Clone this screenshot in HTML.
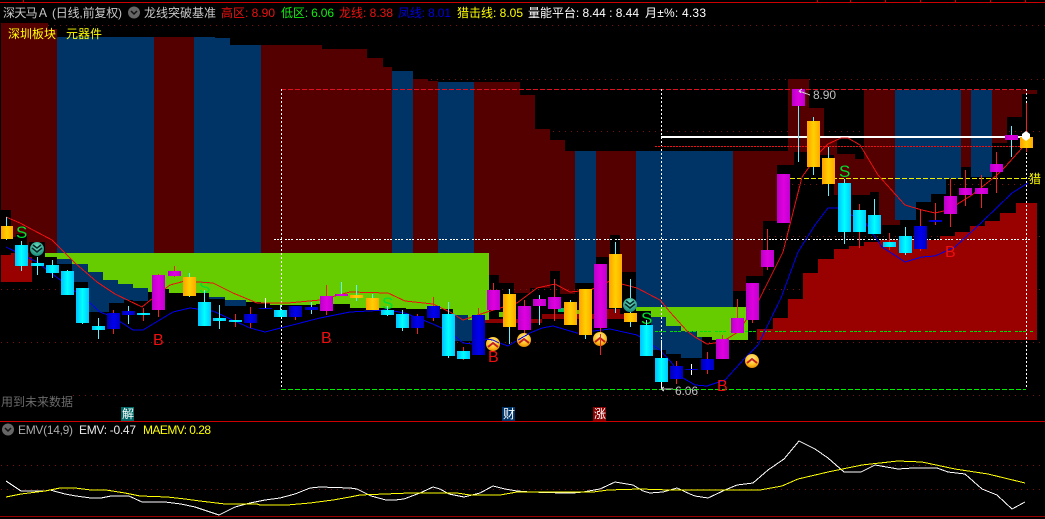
<!DOCTYPE html>
<html><head><meta charset="utf-8"><style>
html,body{margin:0;padding:0;background:#000;width:1045px;height:519px;overflow:hidden}
svg{display:block}
text{font-family:"Liberation Sans","WenQuanYi Zen Hei","Noto Sans CJK SC",sans-serif;font-size:12px}
</style></head><body>
<svg width="1045" height="519" viewBox="0 0 1045 519" xmlns="http://www.w3.org/2000/svg">
<defs>
<linearGradient id="o"><stop offset="0" stop-color="#ffa000"/><stop offset=".5" stop-color="#ffd000"/><stop offset="1" stop-color="#ffa800"/></linearGradient>
<linearGradient id="c"><stop offset="0" stop-color="#00c0ff"/><stop offset=".5" stop-color="#00ffff"/><stop offset="1" stop-color="#00c8ff"/></linearGradient>
<linearGradient id="m"><stop offset="0" stop-color="#b800c8"/><stop offset=".5" stop-color="#e000e0"/><stop offset="1" stop-color="#c000d0"/></linearGradient>
<linearGradient id="b"><stop offset="0" stop-color="#0000b0"/><stop offset=".5" stop-color="#0000f0"/><stop offset="1" stop-color="#0000c0"/></linearGradient>
<radialGradient id="ou" cx=".5" cy=".35" r=".7"><stop offset="0" stop-color="#fff2a0"/><stop offset=".6" stop-color="#ffc020"/><stop offset="1" stop-color="#e08000"/></radialGradient>
<radialGradient id="te" cx=".5" cy=".35" r=".7"><stop offset="0" stop-color="#70e8c8"/><stop offset="1" stop-color="#128070"/></radialGradient>
</defs>
<rect width="1045" height="519" fill="#000"/>

<g shape-rendering="crispEdges">
<!-- grid -->
<g stroke="#7a1010" stroke-width="1" stroke-dasharray="1 5" fill="none">
<path d="M48 25.5H1045M413 79.5H1045M553 131.5H1045M792 184.5H1030M769 236.5H1045M1 289.5H1045M1 342.5H1045M73 395.5H1045M1 465.5H1045M1 489.5H1045"/>
</g>
<!-- dark red / blue blocks -->
<g fill="#550000">
<rect x="1" y="23" width="10" height="187"/>
<rect x="11" y="23" width="5" height="214"/>
<rect x="16" y="23" width="11" height="211"/>
<rect x="27" y="23" width="21" height="230"/>
<rect x="48" y="29" width="9" height="224"/>
<rect x="154" y="37" width="40" height="216"/>
<rect x="261" y="45" width="61" height="208"/>
<rect x="322" y="49" width="45" height="204"/>
<rect x="367" y="58" width="16" height="195"/>
<rect x="383" y="67" width="9" height="186"/>
<rect x="413" y="79" width="15" height="174"/>
<rect x="428" y="81" width="10" height="172"/>
<rect x="474" y="82" width="46" height="232"/>
<rect x="520" y="95" width="15" height="219"/>
<rect x="535" y="129" width="15" height="185"/>
<rect x="550" y="140" width="15" height="174"/>
<rect x="565" y="151" width="10" height="163"/>
<rect x="596" y="151" width="40" height="163"/>
<rect x="733" y="151" width="13" height="140"/>
<rect x="746" y="151" width="17" height="125"/>
<rect x="763" y="151" width="14" height="70"/>
<rect x="777" y="151" width="17" height="14"/>
<rect x="788" y="79" width="21" height="73"/>
<rect x="809" y="108" width="15" height="47"/>
<rect x="824" y="137" width="13" height="18"/>
<rect x="834" y="154" width="21" height="41"/>
<rect x="855" y="159" width="15" height="36"/>
<rect x="864" y="90" width="31" height="102"/>
<rect x="870" y="90" width="9" height="102"/>
<rect x="879" y="90" width="21" height="135"/>
<rect x="961" y="90" width="10" height="77"/>
<rect x="992" y="90" width="15" height="53"/>
<rect x="1007" y="90" width="15" height="27"/>
<rect x="1022" y="90" width="15" height="4"/>
</g>
<g fill="#003366">
<rect x="57" y="37" width="97" height="216"/>
<rect x="194" y="37" width="21" height="216"/>
<rect x="215" y="38" width="15" height="215"/>
<rect x="230" y="45" width="31" height="208"/>
<rect x="392" y="71" width="21" height="182"/>
<rect x="438" y="82" width="36" height="171"/>
<rect x="575" y="151" width="21" height="132"/>
<rect x="636" y="151" width="97" height="156"/>
<rect x="895" y="90" width="21" height="130"/>
<rect x="916" y="90" width="15" height="112"/>
<rect x="931" y="90" width="15" height="104"/>
<rect x="946" y="90" width="15" height="89"/>
<rect x="971" y="90" width="21" height="87"/>
<!-- stairs below green -->
<rect x="57" y="259" width="15" height="5"/>
<rect x="72" y="264" width="16" height="18"/>
<rect x="88" y="272" width="15" height="40"/>
<rect x="103" y="280" width="6" height="32"/>
<rect x="109" y="280" width="9" height="23"/>
<rect x="118" y="284" width="6" height="19"/>
<rect x="124" y="284" width="9" height="16"/>
<rect x="133" y="288" width="15" height="13"/>
<rect x="209" y="293" width="16" height="6"/>
<rect x="225" y="297" width="21" height="9"/>
<rect x="454" y="315" width="19" height="26"/>
<rect x="651" y="317" width="15" height="33"/>
<rect x="666" y="326" width="15" height="28"/>
<rect x="681" y="331" width="21" height="27"/>
</g>
<!-- bright red left -->
<rect x="1" y="255" width="31" height="27" fill="#990000"/>
<rect x="11" y="253" width="21" height="2" fill="#990000"/>
<rect x="45" y="253" width="12" height="4" fill="#66cc00"/>
<!-- black behind candles strip -->
<g fill="#000">
<rect x="489" y="275" width="10" height="49"/><rect x="499" y="283" width="15" height="41"/><rect x="514" y="293" width="16" height="31"/><rect x="530" y="288" width="20" height="36"/><rect x="550" y="271" width="10" height="53"/><rect x="560" y="294" width="20" height="30"/><rect x="580" y="283" width="16" height="41"/><rect x="596" y="257" width="14" height="67"/><rect x="610" y="235" width="10" height="89"/><rect x="620" y="272" width="16" height="52"/>
<rect x="29" y="242" width="16" height="15"/>
</g>
<g stroke="#7a1010" stroke-dasharray="1 5" fill="none"><path d="M490 289.5H620"/></g>
<rect x="474" y="319" width="68" height="4" fill="#880000"/>
<rect x="542" y="314" width="94" height="5" fill="#880000"/>
<rect x="606" y="309" width="14" height="9" fill="#880000"/>
<rect x="576" y="310" width="14" height="4" fill="#66cc00"/>
<rect x="499" y="312" width="4" height="5" fill="#66cc00"/>
<rect x="558" y="308" width="6" height="4" fill="#00c060"/>
<!-- green -->
<polygon fill="#66cc00" points="57,253 489,253 489,320 468,320 468,315 453,315 453,309 406,309 406,308 350,308 350,304 316,304 316,305 270,305 270,303 261,303 261,302 246,302 246,300 225,300 225,297 209,297 209,293 169,293 169,289 165,289 165,292 148,292 148,288 133,288 133,284 118,284 118,280 103,280 103,272 88,272 88,264 72,264 72,259 57,259"/>
<polygon fill="#66cc00" points="636,307 748,307 748,340 712,340 712,337 697,337 697,331 681,331 681,326 666,326 666,317 651,317 651,311 636,311"/>
<!-- bright red stairs right -->
<polygon fill="#990000" points="757,340 757,329 773,329 773,318 788,318 788,299 803,299 803,273 818,273 818,259 834,259 834,249 849,249 849,246 864,246 864,242 880,242 880,240 940,240 940,236 955,236 955,232 970,232 970,226 985,226 985,221 1000,221 1000,213 1016,213 1016,203 1037,203 1037,340"/>

<!-- overlay lines -->
<path d="M281 89.5H1026" stroke="#e01020" stroke-dasharray="5 2" fill="none"/>
<path d="M281.5 89V389M661.5 89V390M1026.5 89V389" stroke="#fff" stroke-dasharray="2 2" fill="none"/>
<path d="M274 239.5H1033" stroke="#fff" stroke-dasharray="2 1 2 1 2 3" fill="none"/>
<path d="M281 389.5H1026" stroke="#00ee00" stroke-dasharray="5 2" fill="none"/>
<path d="M655 146.5H1020" stroke="#ee1111" stroke-dasharray="2 1" fill="none"/>
<path d="M655 331.5H1033" stroke="#00dd00" stroke-dasharray="3 1 3 1 3 4" fill="none"/>
<path d="M790 178.5H1030" stroke="#eeee00" stroke-dasharray="5 2" fill="none"/>
<rect x="661" y="136" width="365" height="2" fill="#fff"/>
</g>

<!-- S markers -->
<g>
<text x="16" y="238" style="font-size:17px" fill="#00e030">S</text>
<text x="199" y="293" style="font-size:17px" fill="#00e030">S</text>
<text x="382" y="309" style="font-size:17px" fill="#00e030">S</text>
<text x="641" y="324" style="font-size:17px" fill="#00e030">S</text>
<text x="839" y="177" style="font-size:17px" fill="#00e030">S</text>
</g>

<g shape-rendering="crispEdges" fill="none">
<!-- moving lines -->
<polyline stroke="#ee1010" points="6,217 20,223 33,230 52,240 75,263 97,282 115,294 142,307 153,298 170,285 185,281 213,283 233,293 257,303 288,303 320,300 350,292 388,293 405,301 433,304 450,312 463,320 487,312 517,303 537,288 555,284 570,292 590,290 610,281 637,288 660,300 670,312 687,331 695,337 707,344 722,342 738,332 758,302 783,252 802,177 820,152 828,144 841,138 848,138 860,145 878,175 905,205 922,210 935,213 948,210 972,195 997,175 1005,167 1022,148 1026,136"/>
<polyline stroke="#0000ee" points="6,247 37,262 90,303 100,312 113,317 133,330 143,330 173,312 190,308 213,311 250,328 265,332 320,318 350,312 387,310 405,313 433,324 450,332 463,343 473,344 488,339 497,342 508,346 518,340 530,333 542,328 553,326 577,333 610,329 637,335 660,350 671,362 683,378 695,385 707,386 725,380 745,358 758,345 781,298 798,252 815,225 828,208 838,208 865,222 882,247 905,262 922,257 935,256 955,247 982,222 1012,193 1028,183"/>
</g>

<!-- wicks -->
<g shape-rendering="crispEdges" fill="none">
<path stroke="#66eeff" d="M6.5 217V240M21.5 241V271M37.5 255V275M52.5 260V278M67.5 270V295M82.5 288V324M98.5 318V339M128.5 306V324M189.5 273V297M204.5 290V326M219.5 305V329M280.5 305V317M311.5 302V314M341.5 282V296M356.5 285V301M372.5 294V310M387.5 306V316M402.5 310V331M448.5 302V358M509.5 289V344M539.5 295V325M570.5 300V325M585.5 289V339M615.5 242V313M630.5 279V327M646.5 320V356M798.5 89V162M813.5 117V175M828.5 147V196M844.5 179V244M874.5 199V234M905.5 227V255M1011.5 126V157"/>
<path stroke="#fff" d="M265.5 298V309M661.5 340V390M691.5 364V375"/>
<path stroke="#ee2222" d="M113.5 310V334M143.5 308V321M158.5 274V317M174.5 266V277M235.5 314V327M250.5 307V328M295.5 306V320M326.5 285V315M417.5 314V334M433.5 297V321M463.5 347V360M478.5 308V355M493.5 283V310M524.5 300V335M554.5 279V321M600.5 264V355M676.5 361V384M707.5 352V374M722.5 335V359M737.5 299V333M752.5 283V323M767.5 229V270M859.5 204V248M889.5 233V250M920.5 209V251M935.5 203V225M950.5 179V227M965.5 170V206M981.5 175V208M996.5 152V193M1026.5 103V152"/>
</g>
<!-- bodies -->
<g shape-rendering="crispEdges">
<g fill="url(#o)">
<rect x="1" y="226" width="12" height="13"/><rect x="183" y="277" width="13" height="19"/><rect x="350" y="295" width="13" height="3"/><rect x="366" y="298" width="13" height="12"/><rect x="503" y="294" width="13" height="33"/><rect x="564" y="302" width="13" height="23"/><rect x="579" y="289" width="13" height="46"/><rect x="609" y="254" width="13" height="54"/><rect x="624" y="313" width="13" height="9"/><rect x="807" y="121" width="13" height="46"/><rect x="822" y="158" width="13" height="26"/><rect x="1020" y="137" width="13" height="11"/>
</g>
<g fill="url(#c)">
<rect x="15" y="245" width="13" height="21"/><rect x="31" y="263" width="13" height="3"/><rect x="46" y="265" width="13" height="8"/><rect x="61" y="271" width="13" height="24"/><rect x="76" y="288" width="13" height="35"/><rect x="92" y="326" width="13" height="4"/><rect x="137" y="313" width="13" height="2"/><rect x="198" y="302" width="13" height="24"/><rect x="213" y="318" width="13" height="3"/><rect x="229" y="320" width="13" height="2"/><rect x="274" y="310" width="13" height="7"/><rect x="381" y="310" width="13" height="5"/><rect x="396" y="314" width="13" height="14"/><rect x="442" y="314" width="13" height="42"/><rect x="457" y="351" width="13" height="8"/><rect x="640" y="325" width="13" height="31"/><rect x="655" y="358" width="13" height="24"/><rect x="838" y="183" width="13" height="49"/><rect x="853" y="210" width="13" height="22"/><rect x="868" y="215" width="13" height="19"/><rect x="883" y="242" width="13" height="5"/><rect x="899" y="236" width="13" height="17"/>
</g>
<g fill="url(#m)">
<rect x="152" y="275" width="13" height="35"/><rect x="168" y="271" width="13" height="5"/><rect x="320" y="296" width="13" height="15"/><rect x="335" y="294" width="13" height="2"/><rect x="487" y="290" width="13" height="20"/><rect x="518" y="306" width="13" height="24"/><rect x="533" y="299" width="13" height="7"/><rect x="548" y="297" width="13" height="12"/><rect x="594" y="264" width="13" height="64"/><rect x="716" y="339" width="13" height="20"/><rect x="731" y="318" width="13" height="15"/><rect x="746" y="283" width="13" height="37"/><rect x="761" y="250" width="13" height="17"/><rect x="777" y="174" width="13" height="49"/><rect x="792" y="89" width="13" height="17"/><rect x="944" y="196" width="13" height="18"/><rect x="959" y="188" width="13" height="7"/><rect x="975" y="188" width="13" height="6"/><rect x="990" y="164" width="13" height="8"/><rect x="1005" y="135" width="13" height="5"/>
</g>
<g fill="url(#b)">
<rect x="107" y="313" width="13" height="16"/><rect x="122" y="311" width="13" height="4"/><rect x="244" y="314" width="13" height="9"/><rect x="259" y="308" width="13" height="1"/><rect x="289" y="306" width="13" height="11"/><rect x="305" y="307" width="13" height="3"/><rect x="411" y="316" width="13" height="12"/><rect x="427" y="306" width="13" height="12"/><rect x="472" y="315" width="13" height="40"/><rect x="670" y="366" width="13" height="13"/><rect x="685" y="369" width="13" height="1"/><rect x="701" y="359" width="13" height="11"/><rect x="914" y="226" width="13" height="23"/><rect x="929" y="220" width="13" height="2"/>
</g>
</g>
<!-- white dot -->
<polygon points="1026,131 1030,134 1030,138 1026,141 1022,138 1022,134" fill="#fff"/>

<!-- B markers -->
<g>
<text x="153" y="345" style="font-size:16px" fill="#ee1010">B</text>
<text x="321" y="343" style="font-size:16px" fill="#ee1010">B</text>
<text x="488" y="362" style="font-size:16px" fill="#ee1010">B</text>
<text x="717" y="391" style="font-size:16px" fill="#ee1010">B</text>
<text x="945" y="257" style="font-size:16px" fill="#ee1010">B</text>
</g>

<!-- teal icons -->
<g>
<rect x="29" y="242" width="16" height="15" fill="#000" shape-rendering="crispEdges"/>
<circle cx="37" cy="249" r="7" fill="url(#te)"/>
<path d="M32 248l5 4 5-4M33 245l4 3 4-3" stroke="#0a2a2a" stroke-width="1.6" fill="none"/>
<circle cx="630" cy="305" r="7" fill="url(#te)"/>
<path d="M625 304l5 4 5-4M626 301l4 3 4-3" stroke="#0a2a2a" stroke-width="1.6" fill="none"/>
</g>
<!-- orange icons -->
<g>
<circle cx="493" cy="344" r="7" fill="url(#ou)"/><path d="M488 347l5-4 5 4" stroke="#c02020" stroke-width="2" fill="none"/>
<circle cx="524" cy="340" r="7" fill="url(#ou)"/><path d="M519 343l5-4 5 4" stroke="#c02020" stroke-width="2" fill="none"/>
<circle cx="600" cy="339" r="7" fill="url(#ou)"/><path d="M595 342l5-4 5 4" stroke="#c02020" stroke-width="2" fill="none"/>
<path d="M600.5 334V355" stroke="#ee2222" shape-rendering="crispEdges"/>
<circle cx="752" cy="361" r="7" fill="url(#ou)"/><path d="M747 363l5-4 5 4" stroke="#c02020" stroke-width="2" fill="none"/>
<polyline points="486,339 493,340 499,343" fill="none" stroke="#0000ee" shape-rendering="crispEdges"/>
<polyline points="518,340 530,333" fill="none" stroke="#0000ee" shape-rendering="crispEdges"/>
</g>

<!-- price labels -->
<path d="M810 95L799 91M799 91l3-2M799 91l2 2" stroke="#ccc" fill="none" shape-rendering="crispEdges"/>
<text x="813" y="99" fill="#c0c0c0" textLength="23" lengthAdjust="spacing">8.90</text>
<path d="M661 389H673M661 389l3-2M661 389l3 2" stroke="#ccc" fill="none" shape-rendering="crispEdges"/>
<text x="675" y="395" fill="#c0c0c0" textLength="23" lengthAdjust="spacing">6.06</text>

<!-- header -->
<g shape-rendering="crispEdges">
<rect x="0" y="2" width="1045" height="1" fill="#cc0000"/>
<path d="M23.5 0V2M817.5 0V2M850.5 0V2M885.5 0V2M920.5 0V2M955.5 0V2M990.5 0V2M1025.5 0V2" stroke="#cc0000"/>
<rect x="0" y="421" width="1045" height="1" fill="#cc0000"/>
<rect x="0" y="516" width="1045" height="1" fill="#990000"/>
</g>
<text x="3" y="17" fill="#c8c8c8" textLength="46" lengthAdjust="spacing">深天马Ａ</text>
<text x="52" y="17" fill="#c8c8c8" textLength="70" lengthAdjust="spacing">(日线,前复权)</text>
<circle cx="134" cy="12.5" r="6" fill="#666"/><path d="M131 11l3 3 3-3" stroke="#111" stroke-width="1.5" fill="none"/>
<text x="144" y="17" fill="#c8c8c8" textLength="72" lengthAdjust="spacing">龙线突破基准</text>
<text x="221" y="17" fill="#ee1010" textLength="54" lengthAdjust="spacing">高区: 8.90</text>
<text x="281" y="17" fill="#10ee10" textLength="53" lengthAdjust="spacing">低区: 6.06</text>
<text x="339" y="17" fill="#ee1010" textLength="54" lengthAdjust="spacing">龙线: 8.38</text>
<text x="398" y="17" fill="#0000dd" textLength="53" lengthAdjust="spacing">凤线: 8.01</text>
<text x="457" y="17" fill="#ffff00" textLength="66" lengthAdjust="spacing">猎击线: 8.05</text>
<text x="528" y="17" fill="#ffffff" textLength="111" lengthAdjust="spacing">量能平台: 8.44 : 8.44</text>
<text x="645" y="17" fill="#ffffff" textLength="61" lengthAdjust="spacing">月±%: 4.33</text>
<text x="8" y="38" fill="#ffff00" textLength="48" lengthAdjust="spacing">深圳板块</text>
<text x="66" y="38" fill="#ffff00" textLength="36" lengthAdjust="spacing">元器件</text>
<text x="1029" y="183" fill="#ffff00">猎</text>
<text x="1" y="406" fill="#6a6a6a" textLength="72" lengthAdjust="spacing">用到未来数据</text>

<rect x="121" y="407" width="13" height="14" fill="#006666" shape-rendering="crispEdges"/>
<text x="122" y="418" fill="#fff">解</text>
<rect x="502" y="407" width="13" height="14" fill="#003366" shape-rendering="crispEdges"/>
<text x="503" y="418" fill="#fff">财</text>
<rect x="593" y="407" width="13" height="14" fill="#880000" shape-rendering="crispEdges"/>
<text x="594" y="418" fill="#fff">涨</text>

<!-- EMV header -->
<circle cx="8" cy="429.5" r="6" fill="#666"/><path d="M5 428l3 3 3-3" stroke="#111" stroke-width="1.5" fill="none"/>
<text x="18" y="434" fill="#aaaaaa" textLength="55" lengthAdjust="spacing">EMV(14,9)</text>
<text x="79" y="434" fill="#e8e8e8" textLength="57" lengthAdjust="spacing">EMV: -0.47</text>
<text x="143" y="434" fill="#ffff00" textLength="68" lengthAdjust="spacing">MAEMV: 0.28</text>

<!-- EMV lines -->
<g fill="none" shape-rendering="crispEdges">
<polyline stroke="#ffffff" points="6,481 21,491 45,491 50,490 65,494 76,496 91,498 101,498 111,496 129,496 142,502 165,502 181,504 195,507 219,515 235,507 250,503 265,500 280,498 295,494 310,488 320,487 350,488 357,489 371,496 386,500 395,500 404,499 420,493 433,487 440,489 449,494 464,497 480,493 493,486 505,489 517,491 530,492 563,493 573,493 583,492 600,489 615,482 633,485 643,491 650,493 663,492 677,488 690,494 695,496 708,498 725,490 737,485 753,483 768,470 784,459 799,441 815,449 828,458 844,472 861,472 875,465 898,469 913,468 937,468 948,472 965,474 982,489 997,495 1012,509 1025,502"/>
<polyline stroke="#ffff00" points="6,497 21,494 45,491 60,488 75,488 91,490 106,490 125,493 140,496 167,497 185,499 200,501 225,504 257,504 260,505 287,505 310,503 333,500 350,497 360,495 410,493 457,493 470,495 500,495 517,492 563,492 593,492 608,490 640,489 670,490 695,490 760,490 782,486 798,479 828,472 862,465 898,461 922,462 955,469 988,474 1025,483"/>
</g>
</svg>
</body></html>
